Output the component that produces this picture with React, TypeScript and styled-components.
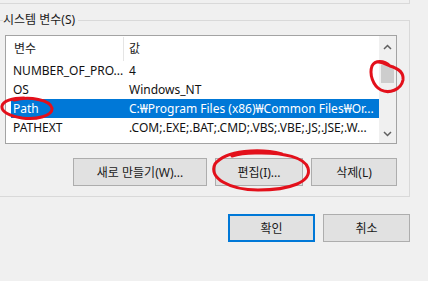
import React from "react";
import styled, { createGlobalStyle, css } from "styled-components";

const GlobalStyle = createGlobalStyle`
	html, body {
		margin: 0;
		padding: 0;
		background: #f0f0f0;
	}
	body {
		width: 428px;
		height: 281px;
		overflow: hidden;
		font-family: "Noto Sans", "Noto Sans CJK KR", sans-serif;
		font-size: 12px;
		color: #000;
	}
	* {
		box-sizing: border-box;
	}
`;

const Page = styled.div`
	position: relative;
	width: 428px;
	height: 281px;
	overflow: hidden;
`;

const Column = styled.div`
	margin-left: -2px;
	width: 412px;
	display: flex;
	flex-direction: column;
`;

const PrevGroupEdge = styled.div`
	height: 4px;
	border-right: 1px solid #d9d9d9;
	border-bottom: 1px solid #d9d9d9;
`;

const GroupBox = styled.fieldset`
	margin: 8px 0 0;
	padding: 7px 12px 10px 6px;
	border: 1px solid #d9d9d9;
	min-width: 0;
`;

const GroupLegend = styled.legend`
	margin-left: -2px;
	padding: 0 3px 0 0;
	line-height: 16px;
	color: #1a1a1a;
`;

const ListView = styled.div`
	width: 392px;
	height: 109px;
	border: 1px solid #a3a3a3;
	background: #fff;
	display: flex;
`;

const ListBody = styled.div`
	flex: 1;
	min-width: 0;
	overflow: hidden;
`;

const Header = styled.div`
	display: flex;
	height: 25px;
	padding-top: 1px;
`;

const HeaderCell = styled.div<{ $width?: number; $pad: number; $divider?: boolean }>`
	${(p) => (p.$width ? `width: ${p.$width}px; flex: none;` : "flex: 1;")}
	padding-left: ${(p) => p.$pad}px;
	line-height: 24px;
	color: #222;
	${(p) =>
		p.$divider &&
		css`
			border-right: 1px solid #e5e5e5;
		`}
`;

const Row = styled.div<{ $selected?: boolean }>`
	display: flex;
	height: 19px;
	margin-left: 5px;
	line-height: 19px;
	white-space: nowrap;
	color: ${(p) => (p.$selected ? "#fff" : "#111")};
	background: ${(p) => (p.$selected ? "#0078d7" : "transparent")};
`;

const Cell = styled.div<{ $width?: number }>`
	${(p) => (p.$width ? `width: ${p.$width}px; flex: none;` : "flex: 1; min-width: 0;")}
	padding-left: 2px;
	overflow: hidden;
`;

const ScrollBar = styled.div`
	width: 17px;
	flex: none;
	background: #f0f0f0;
	display: flex;
	flex-direction: column;
`;

const ScrollArrow = styled.div<{ $height: number }>`
	height: ${(p) => p.$height}px;
	display: flex;
	align-items: center;
	justify-content: center;
`;

const Thumb = styled.div`
	margin: 8px 2px 0;
	height: 18px;
	background: #cdcdcd;
`;

const Track = styled.div`
	flex: 1;
`;

const ButtonRow = styled.div<{ $top: number }>`
	display: flex;
	justify-content: flex-end;
	gap: 8px;
	margin-top: ${(p) => p.$top}px;
`;

const Button = styled.button<{ $width: number; $default?: boolean }>`
	width: ${(p) => p.$width}px;
	height: 28px;
	margin: 0;
	padding: 0;
	background: #e1e1e1;
	border: 1px solid #adadad;
	font-family: inherit;
	font-size: 12px;
	color: #1a1a1a;
	${(p) =>
		p.$default &&
		css`
			border: 2px solid #0078d7;
		`}
`;

const Marks = styled.svg`
	position: absolute;
	left: 0;
	top: 0;
	pointer-events: none;
`;

const Chevron = ({ up }: { up?: boolean }) => (
	<svg width="9" height="6" viewBox="0 0 9 6">
		<polyline
			points={up ? "1,5 4.5,1.5 8,5" : "1,1 4.5,4.5 8,1"}
			fill="none"
			stroke="#606060"
			strokeWidth="1.5"
		/>
	</svg>
);

const rows = [
	{ name: "NUMBER_OF_PRO...", value: "4" },
	{ name: "OS", value: "Windows_NT" },
	{ name: "Path", value: "C:₩Program Files (x86)₩Common Files₩Or...", selected: true },
	{ name: "PATHEXT", value: ".COM;.EXE;.BAT;.CMD;.VBS;.VBE;.JS;.JSE;.W..." }
];

export default function App() {
	return (
		<Page>
			<GlobalStyle />
			<Column>
				<PrevGroupEdge />
				<GroupBox>
					<GroupLegend>시스템 변수(S)</GroupLegend>
					<ListView>
						<ListBody>
							<Header>
								<HeaderCell $width={118} $pad={8} $divider>
									변수
								</HeaderCell>
								<HeaderCell $pad={5}>값</HeaderCell>
							</Header>
							{rows.map((r) => (
								<Row key={r.name} $selected={r.selected}>
									<Cell $width={116}>{r.name}</Cell>
									<Cell>{r.value}</Cell>
								</Row>
							))}
						</ListBody>
						<ScrollBar>
							<ScrollArrow $height={21}>
								<Chevron up />
							</ScrollArrow>
							<Thumb />
							<Track />
							<ScrollArrow $height={18}>
								<Chevron />
							</ScrollArrow>
						</ScrollBar>
					</ListView>
					<ButtonRow $top={14}>
						<Button $width={134}>새로 만들기(W)...</Button>
						<Button $width={88}>편집(I)...</Button>
						<Button $width={86}>삭제(L)</Button>
					</ButtonRow>
				</GroupBox>
				<ButtonRow $top={17}>
					<Button $width={87} $default>
						확인
					</Button>
					<Button $width={87}>취소</Button>
				</ButtonRow>
			</Column>
			<Marks width="428" height="281" viewBox="0 0 428 281">
				<g fill="none" stroke="#e3101b" strokeWidth="3" strokeLinecap="round">
					<path d="M 14 100 C 30 96, 50 100, 52 108 C 53 116, 36 120, 22 118 C 10 116, 1 112, 2 106 C 3 101, 12 98, 24 98" />
					<path d="M 390 66 C 384 60, 375 60, 372 66 C 369 74, 373 86, 381 90 C 389 94, 401 90, 403 80 C 404 72, 397 68, 390 66 C 386 64, 382 62, 378 62" />
					<path d="M 282 154 C 260 148, 226 150, 215 164 C 208 178, 230 190, 258 190 C 290 190, 312 182, 308 168 C 305 158, 285 152, 255 153 C 245 153, 238 154, 232 156" />
				</g>
			</Marks>
		</Page>
	);
}
